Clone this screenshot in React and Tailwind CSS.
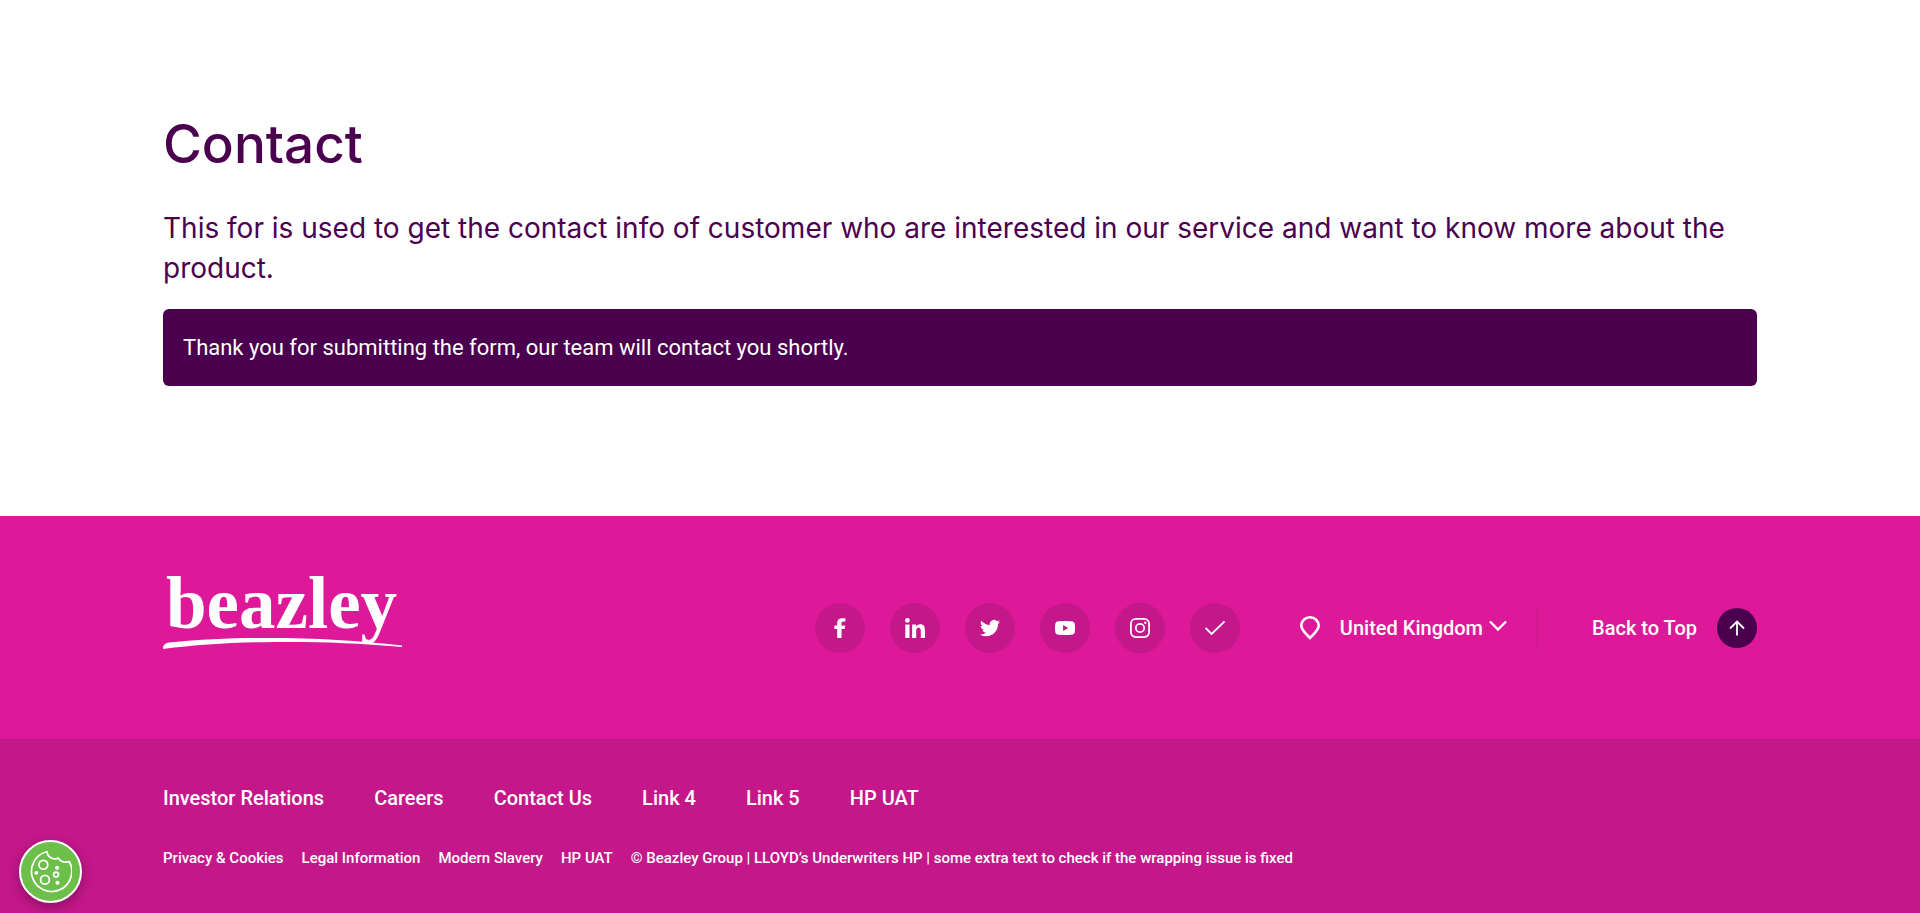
import React from "react";

const primaryLinks = ["Investor Relations", "Careers", "Contact Us", "Link 4", "Link 5", "HP UAT"];
const legalLinks = ["Privacy & Cookies", "Legal Information", "Modern Slavery", "HP UAT"];

function Logo() {
  return (
    <svg width="240" height="78" viewBox="0 0 240 78" fill="#fff" role="img" aria-label="beazley" className="overflow-visible">
      <text
        x="3"
        y="53"
        fontFamily="'Liberation Serif', serif"
        fontWeight="700"
        fontSize="73"
      >
        beazley
      </text>
      <path d="M0 74C0 70 2 68 6 67.500C40 64 70 63 103 63C155 63 195 65.500 239 70.500V72C190 67.500 150 66.500 110 67C70 67.500 35 69.500 0 74Z" />
    </svg>
  );
}

const socials = [
  {
    label: "Facebook",
    icon: (
      <path d="M7.200 20V11H4.400V7.600H7.200V5.200C7.200 1.900 8.900 0.200 12.300 0.200C13.700 0.200 14.900 0.300 15.400 0.400V3.400H13.600C12 3.400 11.500 4.100 11.500 5.400V7.600H15.200L14.700 11H11.500V20Z" fill="#fff" />
    ),
  },
  {
    label: "LinkedIn",
    icon: (
      <path d="M2.400 0A2.400 2.400 0 1 1 2.400 4.800A2.400 2.400 0 0 1 2.400 0ZM0.300 6.600H4.500V20H0.300ZM7.100 6.600H11.100V8.400C11.700 7.300 13.100 6.200 15.200 6.200C19.200 6.200 20 8.900 20 12.500V20H15.800V13.400C15.800 11.800 15.800 9.800 13.600 9.800C11.500 9.800 11.200 11.500 11.200 13.300V20H7.100Z" fill="#fff" />
    ),
  },
  {
    label: "Twitter",
    icon: (
      <path d="M20 3.900A8.200 8.200 0 0 1 17.640 4.550A4.110 4.110 0 0 0 19.450 2.270A8.220 8.220 0 0 1 16.850 3.270A4.100 4.100 0 0 0 9.860 7.010A11.650 11.650 0 0 1 1.400 2.720A4.100 4.100 0 0 0 2.670 8.200A4.090 4.090 0 0 1 0.810 7.690V7.740A4.110 4.110 0 0 0 4.100 11.760A4.100 4.100 0 0 1 2.250 11.830A4.110 4.110 0 0 0 6.080 14.680A8.240 8.240 0 0 1 0 16.380A11.620 11.620 0 0 0 6.290 18.220C13.840 18.220 17.970 11.970 17.970 6.550L17.950 6.020A8.340 8.340 0 0 0 20 3.900Z" fill="#fff" />
    ),
  },
  {
    label: "YouTube",
    icon: (
      <path fillRule="evenodd" d="M4 3.200Q10 2.800 16 3.200Q19.600 3.300 19.800 6.500Q20.200 10 19.800 13.500Q19.600 16.700 16 16.800Q10 17.200 4 16.800Q0.400 16.700 0.200 13.500Q-0.200 10 0.200 6.500Q0.400 3.300 4 3.200ZM8.100 7V13L13.200 10Z" fill="#fff" />
    ),
  },
  {
    label: "Instagram",
    icon: (
      <g fill="none" stroke="#fff" strokeWidth="1.800">
        <rect x="0.900" y="0.900" width="18.200" height="18.200" rx="5" />
        <circle cx="10" cy="10" r="4.200" />
        <circle cx="15.300" cy="4.700" r="1.200" fill="#fff" stroke="none" />
      </g>
    ),
  },
  {
    label: "Confirm",
    icon: <path d="M0.600 10L6.600 16L19.500 3.400" fill="none" stroke="#fff" strokeWidth="1.800" />,
  },
];

function Cookie() {
  return (
    <svg width="43" height="43" viewBox="0 0 42 42" fill="none" stroke="#fff" strokeWidth="1.700" strokeLinejoin="round" className="shrink-0">
      <path d="M17.500 1.700A19.700 19.700 0 1 0 39.400 11.400C37 12 35 12.200 33 11.500C31 10.900 29.500 9.700 28.800 7.900C25.500 9.300 18.800 9 17.500 1.700Z" />
      <circle cx="14" cy="14.500" r="4.300" />
      <circle cx="15.600" cy="29" r="4.300" />
      <circle cx="26.400" cy="24" r="2.400" />
      <g fill="#fff" stroke="none">
        <circle cx="27.400" cy="17.300" r="2" />
        <circle cx="7.200" cy="22.300" r="1.900" />
        <circle cx="27.800" cy="32" r="2" />
      </g>
    </svg>
  );
}

export default function App() {
  return (
    <div className="min-h-screen bg-white font-['Roboto','Liberation_Sans',sans-serif] text-[#4b004f]">
      <main className="mx-auto max-w-[1594px] pt-[112px] pb-[130px]">
        <h1 className="font-['Inter',sans-serif] text-[53px] leading-[64px] font-medium">Contact</h1>
        <p className="mt-8 font-['Inter',sans-serif] text-[28px] leading-10">
          This for is used to get the contact info of customer who are interested in our service and
          want to know more about the product.
        </p>
        <div role="status" className="mt-[21px] rounded-md bg-[#4b004f] px-5 py-6 text-[22px] leading-[29px] text-white">
          Thank you for submitting the form, our team will contact you shortly.
        </div>
      </main>

      <footer className="font-medium text-white">
        <div className="bg-[#dd1899]">
          <div className="mx-auto flex max-w-[1594px] justify-between pt-[59px] pb-[86px]">
            <a href="#home">
              <Logo />
            </a>
            <div className="flex items-center pt-7">
              <ul className="flex gap-[25px]">
                {socials.map((s) => (
                  <li key={s.label}>
                    <a
                      href={"#" + s.label.toLowerCase()}
                      aria-label={s.label}
                      className="flex size-[50px] items-center justify-center rounded-full bg-[#c4178a]"
                    >
                      <svg width="20" height="20" viewBox="0 0 20 20">
                        {s.icon}
                      </svg>
                    </a>
                  </li>
                ))}
              </ul>
              <button type="button" className="ml-[60px] flex items-center text-[20px] leading-6">
                <svg width="20" height="24" viewBox="0 0 20 24" fill="none" stroke="#fff" strokeWidth="2.600">
                  <path d="M10 22C7 18.600 1.300 14.600 1.300 9.500A8.700 8.200 0 0 1 18.700 9.500C18.700 14.600 13 18.600 10 22Z" />
                </svg>
                <span className="ml-5">United Kingdom</span>
                <svg width="18" height="16" viewBox="0 0 18 16" fill="none" stroke="#fff" strokeWidth="2.400" className="ml-1.5">
                  <path d="M1 1.500L9 9.500L17 1.500" />
                </svg>
              </button>
              <span className="ml-[30px] h-10 w-px bg-[#c4178a]" />
              <a href="#top" className="ml-[54px] flex items-center gap-5 text-[20px] leading-6">
                Back to Top
                <span className="flex size-10 items-center justify-center rounded-full bg-[#4b004f]">
                  <svg width="16" height="16" viewBox="0 0 16 16" fill="none" stroke="#fff" strokeWidth="1.800">
                    <path d="M8 15.500V1.500M1 8.500L8 1.500L15 8.500" />
                  </svg>
                </span>
              </a>
            </div>
          </div>
        </div>
        <div className="bg-[#c4178a]">
          <div className="mx-auto max-w-[1594px] pt-[47px] pb-[45px]">
            <nav aria-label="Footer" className="flex gap-[50px] text-[20px] leading-6">
              {primaryLinks.map((l) => (
                <a key={l} href="#link">{l}</a>
              ))}
            </nav>
            <div className="mt-[38px] flex gap-[18px] text-[15px] leading-5">
              {legalLinks.map((l) => (
                <a key={l} href="#link">{l}</a>
              ))}
              <p>© Beazley Group | LLOYD’s Underwriters HP | some extra text to check if the wrapping issue is fixed</p>
            </div>
          </div>
        </div>
      </footer>

      <button
        type="button"
        aria-label="Cookie settings"
        className="fixed bottom-2.5 left-[19px] flex size-[63px] items-center justify-center rounded-full border-2 border-white bg-[#6cc04a] shadow-[0_4px_12px_rgba(0,0,0,0.3)]"
      >
        <Cookie />
      </button>
    </div>
  );
}
